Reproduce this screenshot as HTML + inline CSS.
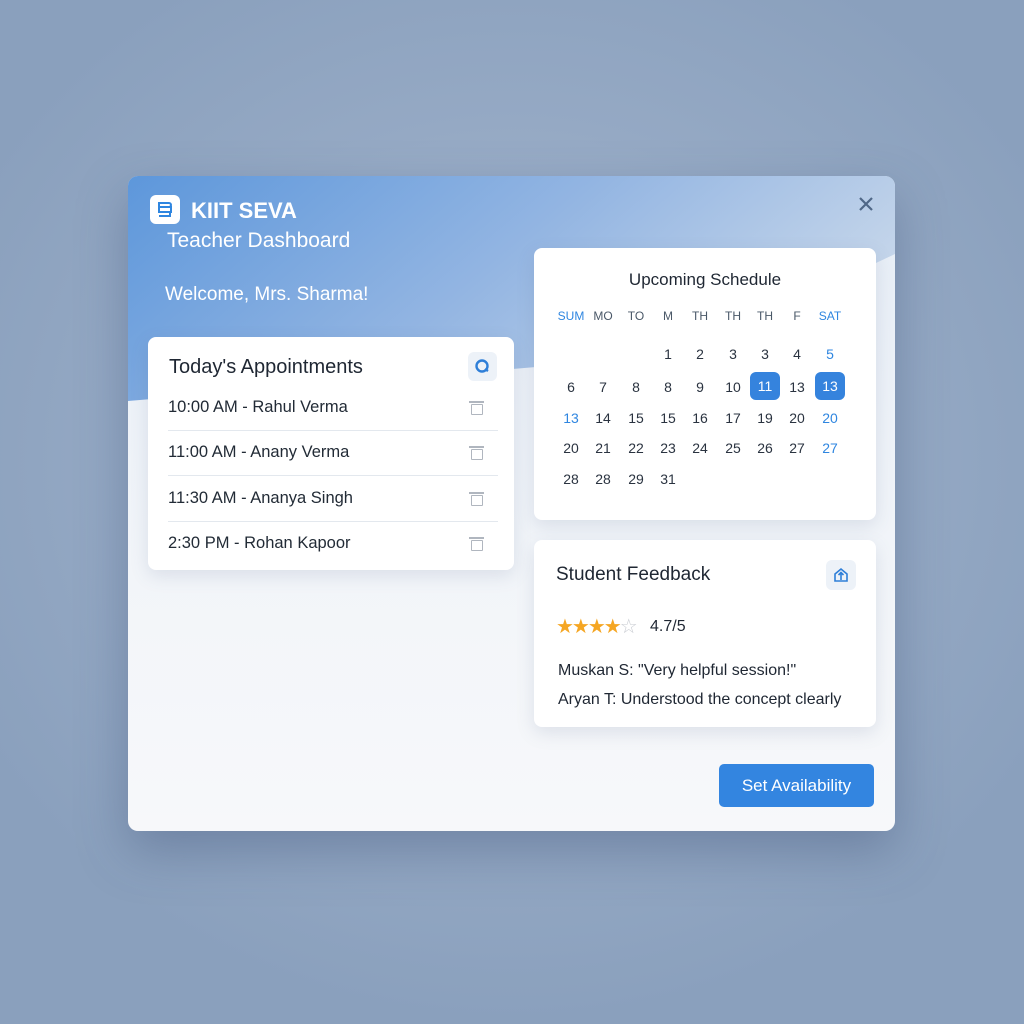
<!DOCTYPE html>
<html><head><meta charset="utf-8"><style>
*{margin:0;padding:0;box-sizing:border-box}
body{width:1024px;height:1024px;overflow:hidden;font-family:"Liberation Sans",sans-serif;
background:radial-gradient(ellipse 60% 55% at 50% 45%,#a9bbd2 0%,#95a9c4 60%,#8aa0bd 100%);position:relative}
.card{position:absolute;left:128px;top:176px;width:767px;height:655px;border-radius:10px;overflow:hidden;
background:linear-gradient(180deg,#e6edf6 0%,#f2f5f9 60%,#f7f8fa 100%);box-shadow:0 20px 50px rgba(50,70,110,.35)}
.abs{position:absolute}
.panel{position:absolute;background:#fff;border-radius:8px;box-shadow:0 6px 18px rgba(80,100,140,.15)}
.t{color:#1f2733}
.cal span{position:absolute;width:30px;margin-left:-15px;text-align:center;font-size:14px;color:#2a3340}
.cal .h{font-size:12px;color:#4a5868}
.cal .b{color:#2f86e0}
.cal .sel{background:#3583dd;color:#fff;border-radius:6px;height:28px;line-height:28px;width:30px;margin-left:-15px}
.row{position:absolute;left:20px;width:330px;font-size:16.5px;color:#222b36}
.line{position:absolute;left:20px;width:330px;height:1px;background:#e3e8ee}
.trash{position:absolute;left:323px;width:12px;height:11px;border:1.5px solid #b0b6bf;border-radius:1px}
.trash:before{content:"";position:absolute;left:-3px;top:-4px;width:15px;height:1.5px;background:#b0b6bf}
</style></head><body>
<div class="card">
<svg class="abs" style="left:0;top:0" width="767" height="655"><defs>
<linearGradient id="g" x1="0" y1="0" x2="1" y2="0.35"><stop offset="0" stop-color="#5d97db"/><stop offset="0.55" stop-color="#93b5e2"/><stop offset="1" stop-color="#c4d5ea"/></linearGradient></defs>
<path d="M0 0H767V78Q620 150 420 190L0 225Z" fill="url(#g)"/></svg>
<div class="abs" style="left:22px;top:19px;width:30px;height:29px;background:#fff;border-radius:6px">
<svg width="30" height="29"><path d="M9 8h10a2 2 0 0 1 0 4H9zM9 12h12v5H9zM9 17h11v4H9" fill="none" stroke="#2f86e0" stroke-width="2"/></svg></div>
<div class="abs" style="left:63px;top:22px;color:#fff;font-weight:bold;font-size:22px">KIIT SEVA</div>
<div class="abs" style="left:39px;top:53px;color:#fff;font-size:21px">Teacher Dashboard</div>
<div class="abs" style="left:37px;top:108px;color:#fff;font-size:19px">Welcome, Mrs. Sharma!</div>
<svg class="abs" style="left:730px;top:20px" width="16" height="16"><path d="M2 2L14 14M14 2L2 14" stroke="#4f6787" stroke-width="2.2"/></svg>

<div class="panel" style="left:20px;top:161px;width:366px;height:233px">
<div class="abs t" style="left:21px;top:19px;font-size:20px">Today's Appointments</div>
<div class="abs" style="left:320px;top:15px;width:29px;height:29px;background:#edf2f8;border-radius:6px">
<svg width="29" height="29"><circle cx="14" cy="14" r="5.5" fill="none" stroke="#2f7fd8" stroke-width="2.4"/><path d="M17 17l3 2" stroke="#2f7fd8" stroke-width="2.4"/></svg></div>
<div class="row" style="top:61px">10:00 AM - Rahul Verma</div><div class="trash" style="top:67px"></div>
<div class="line" style="top:93px"></div>
<div class="row" style="top:106px">11:00 AM - Anany Verma</div><div class="trash" style="top:112px"></div>
<div class="line" style="top:138px"></div>
<div class="row" style="top:152px">11:30 AM - Ananya Singh</div><div class="trash" style="top:158px"></div>
<div class="line" style="top:184px"></div>
<div class="row" style="top:197px">2:30 PM - Rohan Kapoor</div><div class="trash" style="top:203px"></div>
</div>

<div class="panel cal" style="left:406px;top:72px;width:342px;height:272px">
<div class="abs t" style="left:0;width:342px;text-align:center;top:22px;font-size:17px">Upcoming Schedule</div>
<span class="h b" style="left:37px;top:61px">SUM</span><span class="h" style="left:69px;top:61px">MO</span><span class="h" style="left:102px;top:61px">TO</span><span class="h" style="left:134px;top:61px">M</span><span class="h" style="left:166px;top:61px">TH</span><span class="h" style="left:199px;top:61px">TH</span><span class="h" style="left:231px;top:61px">TH</span><span class="h" style="left:263px;top:61px">F</span><span class="h b" style="left:296px;top:61px">SAT</span>
<span style="left:134px;top:98px">1</span><span style="left:166px;top:98px">2</span><span style="left:199px;top:98px">3</span><span style="left:231px;top:98px">3</span><span style="left:263px;top:98px">4</span><span class="b" style="left:296px;top:98px">5</span>
<span style="left:37px;top:131px">6</span><span style="left:69px;top:131px">7</span><span style="left:102px;top:131px">8</span><span style="left:134px;top:131px">8</span><span style="left:166px;top:131px">9</span><span style="left:199px;top:131px">10</span><span class="sel" style="left:231px;top:124px">11</span><span style="left:263px;top:131px">13</span><span class="sel" style="left:296px;top:124px">13</span>
<span class="b" style="left:37px;top:162px">13</span><span style="left:69px;top:162px">14</span><span style="left:102px;top:162px">15</span><span style="left:134px;top:162px">15</span><span style="left:166px;top:162px">16</span><span style="left:199px;top:162px">17</span><span style="left:231px;top:162px">19</span><span style="left:263px;top:162px">20</span><span class="b" style="left:296px;top:162px">20</span>
<span style="left:37px;top:192px">20</span><span style="left:69px;top:192px">21</span><span style="left:102px;top:192px">22</span><span style="left:134px;top:192px">23</span><span style="left:166px;top:192px">24</span><span style="left:199px;top:192px">25</span><span style="left:231px;top:192px">26</span><span style="left:263px;top:192px">27</span><span class="b" style="left:296px;top:192px">27</span>
<span style="left:37px;top:223px">28</span><span style="left:69px;top:223px">28</span><span style="left:102px;top:223px">29</span><span style="left:134px;top:223px">31</span>
</div>

<div class="panel" style="left:406px;top:364px;width:342px;height:187px">
<div class="abs t" style="left:22px;top:24px;font-size:19px">Student Feedback</div>
<div class="abs" style="left:292px;top:20px;width:30px;height:30px;background:#edf2f8;border-radius:6px">
<svg width="30" height="30"><path d="M9 14l6-5 6 5v7H9z" fill="none" stroke="#2f7fd8" stroke-width="1.6"/><path d="M15 20v-7M12.5 15l2.5-2.5 2.5 2.5" fill="none" stroke="#2f7fd8" stroke-width="1.6"/></svg></div>
<div class="abs" style="left:22px;top:74px;font-size:20px;color:#f5a623;letter-spacing:-2px">★★★★<span style="color:#c9ccd2">☆</span></div>
<div class="abs t" style="left:116px;top:78px;font-size:16px">4.7/5</div>
<div class="abs t" style="left:24px;top:122px;font-size:16px">Muskan S: "Very helpful session!"</div>
<div class="abs t" style="left:24px;top:151px;font-size:16px">Aryan T: Understood the concept clearly</div>
</div>

<div class="abs" style="left:591px;top:588px;width:155px;height:43px;background:#3385e0;border-radius:5px;color:#fff;font-size:17px;text-align:center;line-height:43px">Set Availability</div>
</div>
</body></html>
